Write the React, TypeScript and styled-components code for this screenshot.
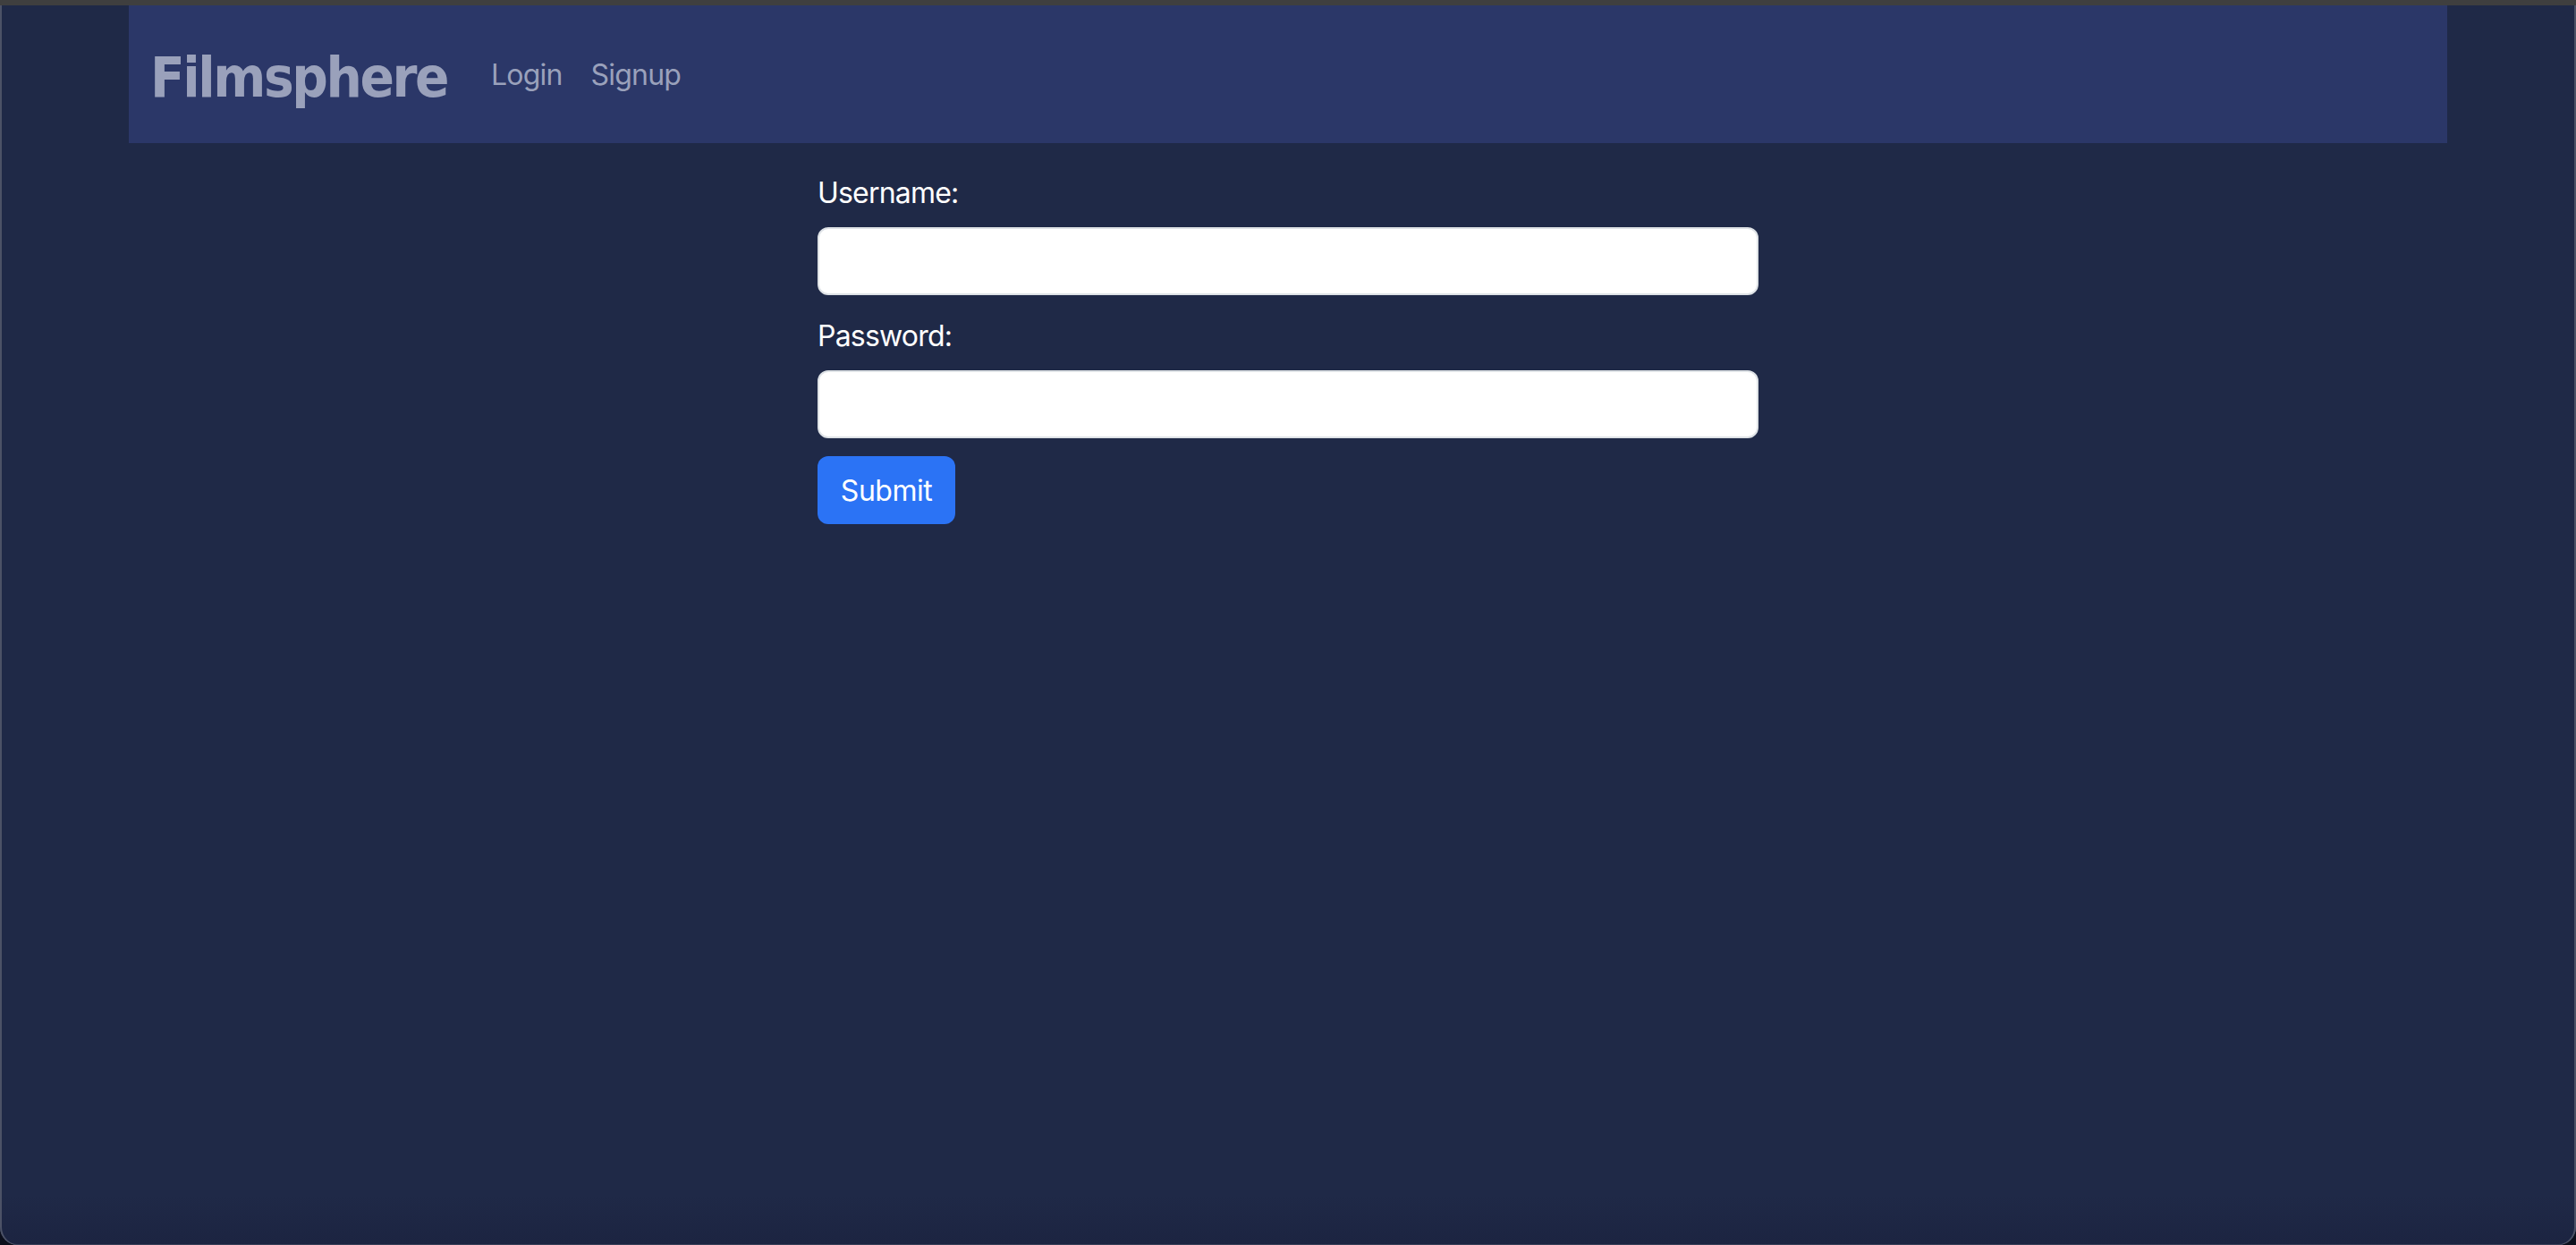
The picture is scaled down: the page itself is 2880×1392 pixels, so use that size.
import React from "react";
import styled, { createGlobalStyle } from "styled-components";

const GlobalStyle = createGlobalStyle`
  html, body {
    margin: 0;
    padding: 0;
    background-color: #0c0f1c;
  }

  * {
    box-sizing: border-box;
  }
`;

const Page = styled.div`
  min-height: 100vh;
  height: 1392px;
  border-top: 6px solid #3f3f3f;
  border-radius: 0 0 20px 20px;
  background: linear-gradient(to bottom, #1f2947 96%, #1c2441 100%);
  box-shadow: inset 2px 0 0 #4c5266, inset -2px 0 0 #4c5266, inset 0 -1px 0 #3a4058;
  font-family: Inter, "Liberation Sans", sans-serif;
  letter-spacing: -0.8px;
  overflow: hidden;
`;

const Navbar = styled.nav`
  display: flex;
  align-items: center;
  width: 2592px;
  height: 154px;
  margin: 0 auto;
  padding-left: 24px;
  background-color: #2b3768;
`;

const Brand = styled.a`
  width: 332px;
  margin-right: 49px;
  padding-top: 6px;
  font-family: "DejaVu Sans", sans-serif;
  font-size: 63px;
  font-stretch: condensed;
  font-weight: 700;
  letter-spacing: -2.4px;
  line-height: 1;
  white-space: nowrap;
  color: #9aa1bb;
`;

const NavLink = styled.a`
  margin-right: 32px;
  padding-top: 2px;
  font-size: 32px;
  line-height: 48px;
  color: #9aa1bb;
`;

const Form = styled.form`
  width: 1052px;
  margin: 0 auto;
  padding-top: 30px;
`;

const Group = styled.div`
  margin-bottom: 20px;
`;

const Label = styled.label`
  display: block;
  margin-bottom: 14px;
  padding-top: 2px;
  font-size: 32px;
  line-height: 48px;
  color: #ffffff;
`;

const Input = styled.input`
  display: block;
  width: 100%;
  height: 76px;
  border: 2px solid #dee2e6;
  border-radius: 12px;
  background-color: #ffffff;
`;

const SubmitButton = styled.button`
  width: 154px;
  height: 76px;
  border: none;
  border-radius: 12px;
  background-color: #2b73f5;
  font-family: inherit;
  font-size: 32px;
  letter-spacing: -0.5px;
  color: #ffffff;
`;

export default function App(): JSX.Element
{
  return (
    <>
      <GlobalStyle />
      <Page>
        <Navbar>
          <Brand>Filmsphere</Brand>
          <NavLink>Login</NavLink>
          <NavLink>Signup</NavLink>
        </Navbar>
        <Form>
          <Group>
            <Label>Username:</Label>
            <Input type="text" />
          </Group>
          <Group>
            <Label>Password:</Label>
            <Input type="password" />
          </Group>
          <SubmitButton type="button">Submit</SubmitButton>
        </Form>
      </Page>
    </>
  );
}
